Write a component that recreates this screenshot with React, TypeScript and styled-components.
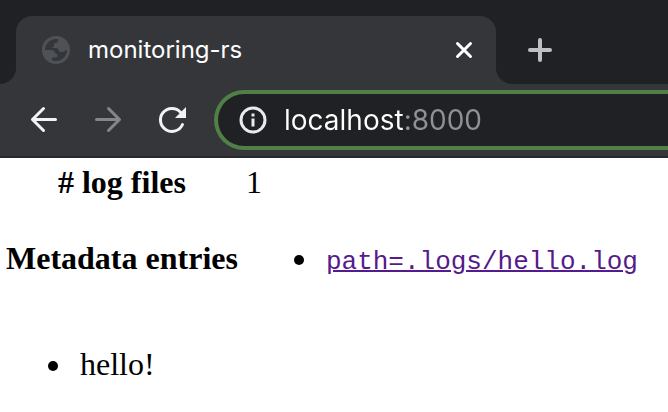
import React from "react";
import styled, { createGlobalStyle } from "styled-components";

const GlobalStyle = createGlobalStyle`
  *, *::before, *::after { box-sizing: border-box; }
  body { margin: 0; background: #fff; }
`;

const uiFont = `Inter, "Liberation Sans", sans-serif`;
const stripColor = "#202124";
const toolbarColor = "#35363a";

const TabStrip = styled.div`
  display: flex;
  height: 84px;
  background: ${toolbarColor};
`;

const StripStart = styled.div`
  width: 16px;
  background: ${stripColor};
  border-bottom-right-radius: 16px;
`;

const TabSlot = styled.div`
  flex: 0 1 480px;
  min-width: 0;
  padding-top: 16px;
  background: linear-gradient(${stripColor} 50%, ${toolbarColor} 50%);
`;

const Tab = styled.div`
  display: flex;
  align-items: center;
  height: 100%;
  padding: 0 20px 0 24px;
  border-radius: 16px 16px 0 0;
  background: ${toolbarColor};
`;

const TabTitle = styled.span`
  flex: 1;
  margin-left: 16px;
  font: 24px/32px ${uiFont};
  color: #fff;
  white-space: nowrap;
`;

const StripEnd = styled.div`
  flex: 1;
  display: flex;
  align-items: center;
  padding: 16px 0 0 28px;
  background: ${stripColor};
  border-bottom-left-radius: 16px;
`;

const IconButton = styled.button<{ $tone?: string }>`
  display: flex;
  flex: none;
  padding: 0;
  border: 0;
  background: none;
  color: ${(p) => p.$tone ?? "#f1f3f4"};
`;

const Icon = styled.svg`
  display: block;
  flex: none;
`;

const Toolbar = styled.div`
  display: flex;
  align-items: center;
  gap: 32px;
  height: 74px;
  padding-left: 28px;
  border-bottom: 2px solid #28292c;
  background: ${toolbarColor};
  overflow: hidden;
`;

const AddressBar = styled.label`
  flex: 1;
  min-width: 0;
  display: flex;
  align-items: center;
  gap: 16px;
  height: 60px;
  margin-left: -6px;
  padding-left: 20px;
  border: 4px solid #507f48;
  border-right: 0;
  border-radius: 30px 0 0 30px;
  background: ${stripColor};
  color: #e8eaed;
`;

const AddressInput = styled.input`
  flex: 1;
  min-width: 0;
  padding: 0;
  border: 0;
  outline: 0;
  font: 28px/36px ${uiFont};
  color: transparent;
  background: linear-gradient(90deg, #fff 120px, #909193 120px);
  background-clip: text;
  -webkit-background-clip: text;
`;

const Page = styled.main`
  font: 32px/36px "Liberation Serif", "Times New Roman", serif;
  color: #000;
`;

const Summary = styled.table`
  border-spacing: 4px;
  th, td { padding: 2px; }
  td { text-align: left; }
`;

const List = styled.ul`
  margin: 32px 0;
  padding-left: 74px;

  li { padding-left: 6px; }
`;

const LogLink = styled.a`
  color: #551a8b;
  text-decoration: underline;
  text-decoration-thickness: 2px;
`;

const Code = styled.code`
  font-family: "Liberation Mono", "Courier New", monospace;
  font-size: 26px;
  line-height: 26px;
`;

export default function App() {
  return (
    <>
      <GlobalStyle />
      <header>
        <TabStrip>
          <StripStart />
          <TabSlot>
            <Tab>
              <Icon width="32" height="32" viewBox="0 0 32 32" aria-hidden="true">
                <circle cx="16" cy="16" r="14" fill="#4e5256" />
                <path
                  d="M5 16C5 10 9.500 5 16 5h2v1.500C18 8 17 9 15.500 9 14.500 9 14 9.500 14 10.500v1c0 1-.5 1.500-1.500 1.500v1H16c1.500 0 2.500 1 2.500 2.500 1 1 2 1.500 3.500 1.500s2.500-1 4-2c1 0 1 .5 1 1C26.500 22.500 22 27 16 27c-1.500 0-3-.3-4-.8V23.500h3.500c1.500 0 2-1 2-2 0-1.500-1-2-2.500-2 0-2.500-1.500-3.500-4-3.500z"
                  fill={toolbarColor}
                />
              </Icon>
              <TabTitle>monitoring-rs</TabTitle>
              <IconButton type="button" aria-label="Close tab" $tone="#fff">
                <Icon width="24" height="24" viewBox="0 0 24 24" fill="none" stroke="currentColor" strokeWidth="3" strokeLinecap="round">
                  <path d="M5.500 5.500l13 13M18.500 5.500l-13 13" />
                </Icon>
              </IconButton>
            </Tab>
          </TabSlot>
          <StripEnd>
            <IconButton type="button" aria-label="New tab" $tone="#bdc1c6">
              <Icon width="32" height="32" viewBox="0 0 32 32" fill="none" stroke="currentColor" strokeWidth="4" strokeLinecap="round">
                <path d="M16 6v20M6 16h20" />
              </Icon>
            </IconButton>
          </StripEnd>
        </TabStrip>
        <Toolbar>
          <IconButton type="button" aria-label="Back">
            <Icon width="32" height="32" viewBox="0 0 32 32" fill="none" stroke="currentColor" strokeWidth="3" strokeLinecap="round" strokeLinejoin="round">
              <path d="M27.500 15.500H4.500M15.500 4.500L4.500 15.500l11 11" />
            </Icon>
          </IconButton>
          <IconButton type="button" aria-label="Forward" $tone="#858689">
            <Icon width="32" height="32" viewBox="0 0 32 32" fill="none" stroke="currentColor" strokeWidth="3" strokeLinecap="round" strokeLinejoin="round">
              <path d="M4.500 15.500h23M16.500 4.500l11 11-11 11" />
            </Icon>
          </IconButton>
          <IconButton type="button" aria-label="Reload">
            <Icon width="32" height="32" viewBox="0 0 32 32">
              <path d="M26.500 20.500A11.500 11.500 0 1 1 24.500 8.200" fill="none" stroke="currentColor" strokeWidth="3" strokeLinecap="round" />
              <path d="M30 3v11H19z" fill="currentColor" />
            </Icon>
          </IconButton>
          <AddressBar>
            <Icon width="30" height="30" viewBox="0 0 30 30" aria-hidden="true">
              <circle cx="15" cy="15" r="12" fill="none" stroke="currentColor" strokeWidth="3" />
              <path d="M13.500 8.500h3v3h-3zM13.500 13.500h3v8h-3z" fill="currentColor" />
            </Icon>
            <AddressInput type="text" aria-label="Address" defaultValue="localhost:8000" spellCheck={false} />
          </AddressBar>
        </Toolbar>
      </header>
      <Page>
        <Summary>
          <tbody>
            <tr>
              <th scope="row"># log files</th>
              <td>1</td>
            </tr>
            <tr>
              <th scope="row">Metadata entries</th>
              <td>
                <List>
                  <li>
                    <LogLink href="#hello">
                      <Code>path=.logs/hello.log</Code>
                    </LogLink>
                  </li>
                </List>
              </td>
            </tr>
          </tbody>
        </Summary>
        <List>
          <li>hello!</li>
        </List>
      </Page>
    </>
  );
}
